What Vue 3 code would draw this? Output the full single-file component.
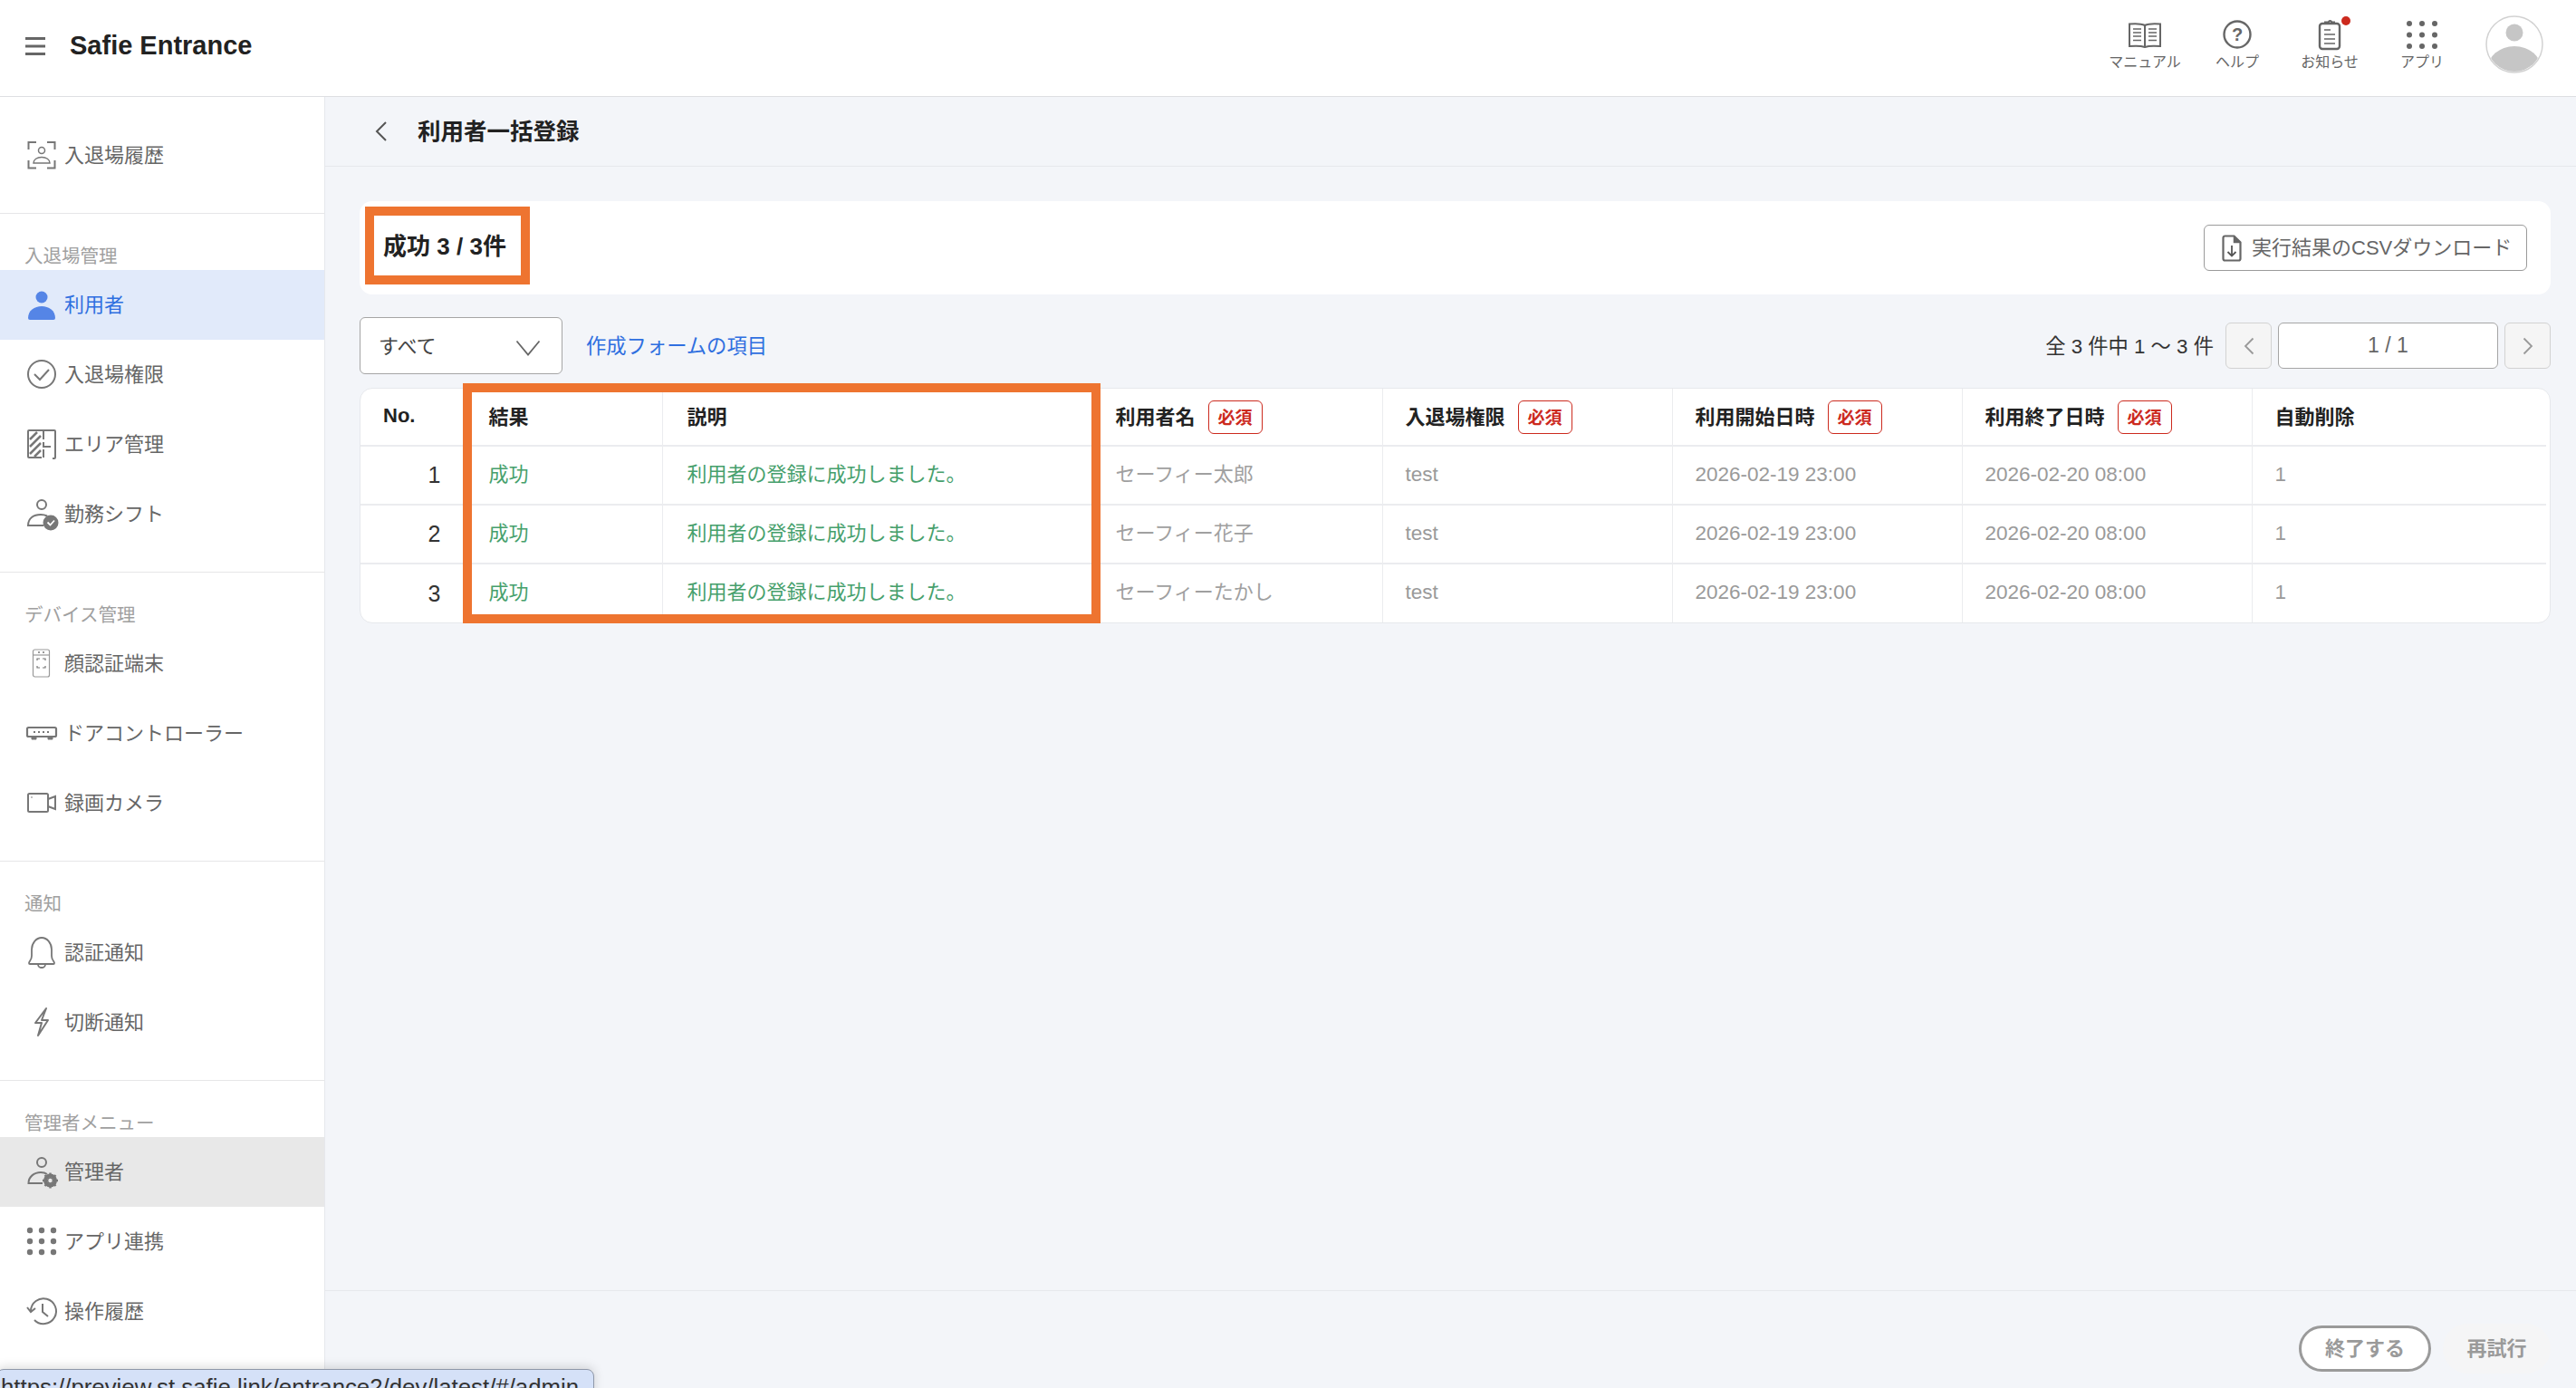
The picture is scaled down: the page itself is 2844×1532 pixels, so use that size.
<template>
  <div class="app">
    <header class="top-bar">
      <div class="brand">
        <svg class="menu-icon" width="22" height="22" viewBox="0 0 22 22">
          <path d="M0 2.500h22M0 11h22M0 19.500h22" stroke="#666" stroke-width="3.200" fill="none" />
        </svg>
        <span class="brand-name">Safie Entrance</span>
      </div>
      <div class="top-actions">
        <div v-for="a in topActions" :key="a.label" class="top-action">
          <svg class="top-icon" width="48" height="34" viewBox="0 0 48 34" v-html="a.icon"></svg>
          <span>{{ a.label }}</span>
        </div>
        <svg class="avatar" width="64" height="64" viewBox="0 0 64 64">
          <defs>
            <clipPath id="avatar-clip"><circle cx="32" cy="32" r="30" /></clipPath>
          </defs>
          <circle cx="32" cy="32" r="31" fill="#fff" stroke="#d2d2d2" stroke-width="1.500" />
          <circle cx="32" cy="19" r="9.500" fill="#c6c6c6" />
          <ellipse cx="32" cy="60" rx="30" ry="26" fill="#c6c6c6" clip-path="url(#avatar-clip)" />
        </svg>
      </div>
    </header>

    <div class="body">
      <aside class="sidebar">
        <section v-for="(sec, i) in nav" :key="i" class="nav-section">
          <div v-if="sec.title" class="nav-title">{{ sec.title }}</div>
          <div
            v-for="item in sec.items"
            :key="item.label"
            class="nav-item"
            :class="{ active: item.active, selected: item.selected }"
          >
            <svg class="nav-icon" width="32" height="32" viewBox="0 0 32 32" v-html="item.icon"></svg>
            <span>{{ item.label }}</span>
          </div>
        </section>
      </aside>

      <div class="page">
        <div class="crumb">
          <svg width="16" height="24" viewBox="0 0 16 24">
            <path d="M13 2 3 12l10 10" stroke="#555" stroke-width="2" fill="none" />
          </svg>
          <h1>利用者一括登録</h1>
        </div>

        <main class="content">
          <div class="summary-card">
            <div class="summary-count">成功 3 / 3件</div>
            <button class="csv-btn">
              <svg width="22" height="30" viewBox="0 0 22 30">
                <path
                  d="M3.500 1.500h10l7 7v18a2 2 0 0 1-2 2h-15a2 2 0 0 1-2-2v-23a2 2 0 0 1 2-2z"
                  fill="none"
                  stroke="#666"
                  stroke-width="2.200"
                />
                <path d="M13.500 1.500v7h7" fill="#666" stroke="#666" stroke-width="1.500" />
                <path d="M11 12v11M6.500 19l4.500 4.500 4.500-4.500" fill="none" stroke="#555" stroke-width="1.800" />
              </svg>
              <span>実行結果のCSVダウンロード</span>
            </button>
          </div>

          <div class="toolbar">
            <div class="select">
              <span>すべて</span>
              <svg width="28" height="18" viewBox="0 0 28 18">
                <path d="M1.500 1.500 14 16.500 26.500 1.500" fill="none" stroke="#666" stroke-width="1.800" />
              </svg>
            </div>
            <a class="form-link">作成フォームの項目</a>
            <div class="pager">
              <span class="pager-text">全 3 件中 1 〜 3 件</span>
              <button class="page-btn">
                <svg width="12" height="20" viewBox="0 0 12 20">
                  <path d="M10.500 1.500 2 10l8.500 8.500" fill="none" stroke="#999" stroke-width="1.800" />
                </svg>
              </button>
              <div class="page-input">1 / 1</div>
              <button class="page-btn">
                <svg width="12" height="20" viewBox="0 0 12 20">
                  <path d="M1.500 1.500 10 10l-8.500 8.500" fill="none" stroke="#999" stroke-width="1.800" />
                </svg>
              </button>
            </div>
          </div>

          <div class="table-wrap">
            <table class="result-table">
              <colgroup>
                <col style="width: 116px" />
                <col style="width: 217px" />
                <col style="width: 475px" />
                <col style="width: 320px" />
                <col style="width: 320px" />
                <col style="width: 320px" />
                <col style="width: 320px" />
                <col />
              </colgroup>
              <thead>
                <tr>
                  <th v-for="col in columns" :key="col.label">
                    <span class="th-inner">
                      <span class="th-label">{{ col.label }}</span>
                      <em v-if="col.required" class="required">必須</em>
                    </span>
                  </th>
                </tr>
              </thead>
              <tbody>
                <tr v-for="row in rows" :key="row.no">
                  <td class="cell-no">{{ row.no }}</td>
                  <td class="cell-ok">成功</td>
                  <td class="cell-ok">利用者の登録に成功しました。</td>
                  <td class="cell-name">{{ row.name }}</td>
                  <td>test</td>
                  <td>2026-02-19 23:00</td>
                  <td>2026-02-20 08:00</td>
                  <td>1</td>
                </tr>
              </tbody>
            </table>
            <div class="table-highlight"></div>
          </div>
        </main>

        <footer class="page-footer">
          <button class="btn-finish">終了する</button>
          <button class="btn-retry">再試行</button>
        </footer>
      </div>
    </div>

    <div class="url-tip">https://preview.st.safie.link/entrance2/dev/latest/#/admin</div>
  </div>
</template>

<script setup>
const dots = (x0, y0, stepX, stepY, r, fill) => {
  let out = ''
  for (let y = 0; y < 3; y++) {
    for (let x = 0; x < 3; x++) {
      out += `<circle cx="${x0 + x * stepX}" cy="${y0 + y * stepY}" r="${r}" fill="${fill}"/>`
    }
  }
  return out
}

const topActions = [
  {
    label: 'マニュアル',
    icon: `<g fill="none" stroke="#666" stroke-width="2">
      <path d="M24 7C20 5 13 5 7 5.500V30c6-.5 13-.5 17 1 4-1.500 11-1.500 17-1V5.500C35 5 28 5 24 7z"/>
      <path d="M24 7v24"/>
      <path stroke-width="1.500" d="M11 11h9M11 15h9M11 19h9M11 23.500h9M28 11h9M28 15h9M28 19h9M28 23.500h9"/></g>`
  },
  {
    label: 'ヘルプ',
    icon: `<circle cx="24" cy="17" r="14.500" fill="none" stroke="#666" stroke-width="2.400"/>
      <text x="24" y="24" text-anchor="middle" font-family="Liberation Sans" font-weight="700" font-size="20" fill="#666">?</text>`
  },
  {
    label: 'お知らせ',
    icon: `<rect x="13" y="5" width="22" height="28" rx="3" fill="none" stroke="#666" stroke-width="2.400"/>
      <path d="M19 6V3.500h4a1.500 1.500 0 0 1 3 0h3V6" fill="none" stroke="#666" stroke-width="2"/>
      <path d="M18 12h7M18 17h12M18 22h12M18 27h12" stroke="#666" stroke-width="1.600"/>
      <circle cx="42" cy="2" r="5" fill="#cc2a1e"/>`
  },
  { label: 'アプリ', icon: dots(10, 5, 14, 12.500, 3, '#666') }
]

const nav = [
  {
    items: [
      {
        label: '入退場履歴',
        icon: `<g fill="none" stroke="#777" stroke-width="2">
          <path d="M10 2H1.500v8M22 2h8.500v8M1.500 22v8.500H10M30.500 22v8.500H22" />
          <circle cx="16" cy="11" r="3.500" stroke-width="1.500"/>
          <path stroke-width="1.500" d="M7 25c0-4 4-6.500 9-6.500s9 2.500 9 6.500z"/></g>`
      }
    ]
  },
  {
    title: '入退場管理',
    items: [
      {
        label: '利用者',
        active: true,
        icon: `<circle cx="16" cy="8" r="6.500" fill="#5585e6"/>
          <path d="M1 31c0-8 7-13 15-13s15 5 15 13q0 2-2 2H3q-2 0-2-2z" fill="#5585e6"/>`
      },
      {
        label: '入退場権限',
        icon: `<circle cx="16" cy="16" r="15" fill="none" stroke="#777" stroke-width="2"/>
          <path d="M8 16l6 6 10-11" fill="none" stroke="#777" stroke-width="2"/>`
      },
      {
        label: 'エリア管理',
        icon: `<g fill="none" stroke="#777" stroke-width="2">
          <path d="M2 1h28q1 0 1 1v29q0 1-1 1h-2M31 1v0M2 1q-1 0-1 1v28q0 1 1 1h14"/>
          <path d="M18 2v9M18 14v5h8M30 17h1M18 22v9"/>
          <path stroke-width="2.500" d="M3 11 11 3M3 19 15 7M3 27 15 15M8 30 15 23"/></g>`
      },
      {
        label: '勤務シフト',
        icon: `<circle cx="16" cy="6" r="5" fill="none" stroke="#777" stroke-width="2"/>
          <path d="M18 29H1c0-8 6-12 14-12 3 0 5 .5 7 1.500" fill="none" stroke="#777" stroke-width="2"/>
          <circle cx="26" cy="26" r="8.500" fill="#777"/>
          <path d="M22.500 25.500l3 3 4.500-5" fill="none" stroke="#fff" stroke-width="1.800"/>`
      }
    ]
  },
  {
    title: 'デバイス管理',
    items: [
      {
        label: '顔認証端末',
        icon: `<g fill="none" stroke="#999" stroke-width="1.200">
          <rect x="6.500" y="1" width="18" height="30" rx="2"/>
          <path d="M6.500 7h18"/>
          <path d="M11 13v-2h3M17 11h3v2M11 19v2h3M17 21h3v-2" stroke="#777"/></g>
          <circle cx="13" cy="4" r="1" fill="#777"/><circle cx="18" cy="4" r="1" fill="#777"/>`
      },
      {
        label: 'ドアコントローラー',
        icon: `<rect x="0" y="10" width="32" height="10" rx="1.500" fill="none" stroke="#777" stroke-width="2.200"/>
          <path d="M5 21v2h5v-2M23 21v2h5v-2" fill="#777" stroke="#777" stroke-width="1"/>
          <path d="M7 15h2M12 15h2M17 15h2M22 15h2" stroke="#777" stroke-width="2"/>`
      },
      {
        label: '録画カメラ',
        icon: `<rect x="1" y="6" width="22" height="20" rx="1.500" fill="none" stroke="#777" stroke-width="2"/>
          <path d="M23 12l8-3v14l-8-3" fill="none" stroke="#777" stroke-width="2"/>
          <circle cx="5" cy="10" r=".8" fill="#777"/>`
      }
    ]
  },
  {
    title: '通知',
    items: [
      {
        label: '認証通知',
        icon: `<path d="M2 28c0-2 3-3 3-8v-7C5 6 10 0 16 0s11 6 11 13v7c0 5 3 6 3 8 0 .5-.5 1-1 1H3c-.5 0-1-.5-1-1z" fill="none" stroke="#777" stroke-width="1.800"/>
          <path d="M12 29.500a4 3.500 0 0 0 8 0" fill="none" stroke="#777" stroke-width="1.800"/>`
      },
      {
        label: '切断通知',
        icon: `<path d="M21 1 9 17h7l-4 14 11-17h-7z" fill="none" stroke="#777" stroke-width="2" stroke-linejoin="round"/>`
      }
    ]
  },
  {
    title: '管理者メニュー',
    items: [
      {
        label: '管理者',
        selected: true,
        icon: `<circle cx="16" cy="6" r="5" fill="none" stroke="#777" stroke-width="2"/>
          <path d="M17 29H1.500c0-7 6-12 13.500-12 2.500 0 5 .5 7 2" fill="none" stroke="#777" stroke-width="2"/>
          <circle cx="25.500" cy="26" r="5.500" fill="none" stroke="#777" stroke-width="4"/>
          <path d="M25.500 17.500v17M17 26h17M19.500 20l12 12M31.500 20l-12 12" stroke="#777" stroke-width="2.400"/>
          <circle cx="25.500" cy="26" r="2.200" fill="#e8e8e8"/>`
      },
      { label: 'アプリ連携', icon: dots(3, 4, 13, 12, 3.200, '#777') },
      {
        label: '操作履歴',
        icon: `<path d="M4 16a14 14 0 1 1 4 10" fill="none" stroke="#777" stroke-width="2"/>
          <path d="M0 12l4 5 5-4" fill="none" stroke="#777" stroke-width="2"/>
          <path d="M17 8v9l6 5" fill="none" stroke="#777" stroke-width="2"/>`
      }
    ]
  }
]

const columns = [
  { label: 'No.' },
  { label: '結果' },
  { label: '説明' },
  { label: '利用者名', required: true },
  { label: '入退場権限', required: true },
  { label: '利用開始日時', required: true },
  { label: '利用終了日時', required: true },
  { label: '自動削除' }
]

const rows = [
  { no: 1, name: 'セーフィー太郎' },
  { no: 2, name: 'セーフィー花子' },
  { no: 3, name: 'セーフィーたかし' }
]
</script>

<style scoped>
.app {
  height: 100vh;
  display: flex;
  flex-direction: column;
  overflow: hidden;
  position: relative;
  font-family: "Liberation Sans", "Noto Sans CJK JP", sans-serif;
  color: #222;
  background: #f3f5f9;
}

button {
  font-family: inherit;
}

.top-bar {
  height: 106px;
  flex: none;
  display: flex;
  align-items: center;
  justify-content: space-between;
  background: #fff;
  border-bottom: 1px solid #dedfe2;
  padding: 0 36px 0 28px;
}

.brand {
  display: flex;
  align-items: center;
  gap: 27px;
  margin-bottom: 6px;
}

.menu-icon {
  margin-top: 2px;
}

.brand-name {
  font-size: 29px;
  font-weight: 700;
  color: #222;
}

.top-actions {
  display: flex;
  align-items: center;
}

.top-action {
  width: 102px;
  display: flex;
  flex-direction: column;
  align-items: center;
  font-size: 16px;
  line-height: 22px;
  color: #666;
  white-space: nowrap;
  margin-bottom: 6px;
}

.top-icon {
  overflow: visible;
  margin-bottom: 3px;
}

.avatar {
  margin-left: 19px;
  margin-bottom: 8px;
}

.body {
  flex: 1;
  display: flex;
  min-height: 0;
}

.sidebar {
  width: 358px;
  flex: none;
  background: #fff;
  border-right: 1px solid #e6e8ec;
}

.nav-section {
  padding-bottom: 25px;
  border-bottom: 1px solid #e6e6e8;
}

.nav-section:first-child {
  padding-top: 26px;
}

.nav-section:last-child {
  border-bottom: none;
}

.nav-title {
  height: 31px;
  margin-top: 31px;
  padding-left: 27px;
  font-size: 20.500px;
  line-height: 31px;
  color: #a0a0a0;
}

.nav-item {
  height: 77px;
  display: flex;
  align-items: center;
  gap: 9px;
  padding-left: 30px;
  font-size: 22px;
  color: #666;
}

.nav-item span {
  padding-bottom: 5px;
}

.nav-icon {
  flex: none;
  overflow: visible;
  margin-bottom: 2px;
}

.nav-item.active {
  background: #e1eafa;
  color: #2f6fe0;
}

.nav-item.selected {
  background: #e8e8e8;
}

.page {
  flex: 1;
  min-width: 0;
  display: flex;
  flex-direction: column;
}

.crumb {
  height: 76px;
  flex: none;
  display: flex;
  align-items: center;
  gap: 32px;
  padding-left: 54px;
  border-bottom: 1px solid #e6e8ec;
}

.crumb h1 {
  margin: 0 0 5px;
  font-size: 25.500px;
  font-weight: 700;
  color: #222;
}

.content {
  flex: 1;
  padding: 38px 28px 0 38px;
}

.summary-card {
  height: 103px;
  display: flex;
  align-items: center;
  justify-content: space-between;
  background: #fff;
  border-radius: 14px;
  padding: 0 26px 0 6px;
}

.summary-count {
  box-sizing: border-box;
  width: 182px;
  height: 86px;
  margin-top: -6px;
  border: 10px solid #ee7430;
  display: flex;
  align-items: center;
  justify-content: center;
  padding: 0 6px 2px 0;
  font-size: 26px;
  font-weight: 700;
  white-space: nowrap;
}

.csv-btn {
  box-sizing: border-box;
  width: 357px;
  height: 51px;
  display: flex;
  align-items: center;
  gap: 11px;
  padding: 0 0 0 19px;
  background: #fff;
  border: 1.500px solid #9a9a9a;
  border-radius: 6px;
  font-size: 22px;
  color: #666;
  white-space: nowrap;
}

.csv-btn span {
  padding-bottom: 6px;
}

.toolbar {
  display: flex;
  align-items: center;
  height: 63px;
  margin-top: 25px;
}

.select {
  box-sizing: border-box;
  width: 224px;
  height: 63px;
  display: flex;
  align-items: center;
  justify-content: space-between;
  padding: 0 23px 0 20px;
  background: #fff;
  border: 1.500px solid #a5a5a5;
  border-radius: 6px;
  font-size: 22px;
  color: #444;
}

.select span {
  padding-bottom: 4px;
}

.select svg {
  margin-top: 4px;
}

.form-link {
  margin-left: 26px;
  padding-bottom: 4px;
  font-size: 22.300px;
  color: #2f6fe0;
}

.pager {
  margin-left: auto;
  display: flex;
  align-items: center;
  gap: 7px;
}

.pager-text {
  margin-right: 6px;
  padding-bottom: 4px;
  font-size: 22.300px;
  color: #333;
  white-space: nowrap;
}

.page-btn {
  box-sizing: border-box;
  width: 51px;
  height: 51px;
  display: flex;
  align-items: center;
  justify-content: center;
  padding: 0;
  background: #f5f5f5;
  border: 1.500px solid #d2d2d2;
  border-radius: 6px;
}

.page-input {
  box-sizing: border-box;
  width: 243px;
  height: 51px;
  display: flex;
  align-items: center;
  justify-content: center;
  background: #fff;
  border: 1.500px solid #a5a5a5;
  border-radius: 6px;
  font-size: 23px;
  color: #666;
}

.table-wrap {
  position: relative;
  margin-top: 15px;
  padding-right: 4px;
  background: #fff;
  border: 1px solid #e6e8ec;
  border-radius: 14px;
}

.result-table {
  width: 100%;
  table-layout: fixed;
  border-collapse: collapse;
}

.result-table th {
  box-sizing: border-box;
  height: 63px;
  padding: 0 0 0 25px;
  text-align: left;
  font-size: 22px;
  font-weight: 700;
  color: #222;
  white-space: nowrap;
  border-bottom: 2px solid #ebecef;
  border-left: 1px solid #ebecef;
}

.result-table td {
  box-sizing: border-box;
  height: 65px;
  padding: 0 0 2px 25px;
  font-size: 22.500px;
  color: #9a9a9a;
  white-space: nowrap;
  border-bottom: 2px solid #ebecef;
  border-left: 1px solid #ebecef;
}

.result-table tr > :first-child {
  border-left: none;
}

.result-table tr > :nth-child(3) {
  padding-left: 27px;
}

.result-table tbody tr:last-child td {
  border-bottom: none;
}

.th-inner {
  display: inline-flex;
  align-items: center;
  gap: 14px;
}

.th-label {
  padding-bottom: 5px;
}

.result-table th:first-child .th-label {
  padding-bottom: 2px;
}

.required {
  box-sizing: border-box;
  width: 60px;
  height: 37px;
  display: inline-flex;
  align-items: center;
  justify-content: center;
  padding-bottom: 2px;
  border: 1px solid #cc2a1e;
  border-radius: 6px;
  font-size: 19px;
  font-style: normal;
  font-weight: 700;
  color: #cc2a1e;
}

.result-table td.cell-no {
  padding: 0 27px 0 0;
  text-align: right;
  font-size: 25px;
  color: #333;
}

.result-table td.cell-ok {
  padding-bottom: 8px;
  font-size: 22px;
  color: #46a06c;
}

.result-table td.cell-name {
  padding-bottom: 8px;
  font-size: 22px;
  color: #a0a0a0;
}

.table-highlight {
  position: absolute;
  left: 113px;
  top: -6px;
  bottom: -1px;
  width: 704px;
  box-sizing: border-box;
  border: 10px solid #ee7430;
  pointer-events: none;
}

.page-footer {
  height: 108px;
  flex: none;
  box-sizing: border-box;
  display: flex;
  align-items: center;
  justify-content: flex-end;
  gap: 13px;
  padding: 19px 28px 0 0;
  border-top: 1px solid #e6e8ec;
}

.btn-finish {
  box-sizing: border-box;
  width: 146px;
  height: 51px;
  padding: 0 0 4px;
  background: #fff;
  border: 3px solid #9a9a9a;
  border-radius: 26px;
  font-size: 22px;
  font-weight: 700;
  color: #9a9a9a;
}

.btn-retry {
  box-sizing: border-box;
  width: 119px;
  height: 55px;
  padding: 0 0 4px;
  background: #f5f5f6;
  border: none;
  border-radius: 28px;
  font-size: 22px;
  font-weight: 700;
  color: #9a9a9a;
}

.url-tip {
  position: absolute;
  left: -4px;
  top: 1511px;
  box-sizing: border-box;
  width: 660px;
  height: 40px;
  padding: 5px 0 0 4px;
  background: #d5e1f8;
  border: 1px solid #8f97a8;
  border-radius: 8px;
  box-shadow: 0 -2px 12px rgba(0, 0, 0, 0.15);
  font-size: 25.800px;
  color: #333;
  white-space: nowrap;
}
</style>
